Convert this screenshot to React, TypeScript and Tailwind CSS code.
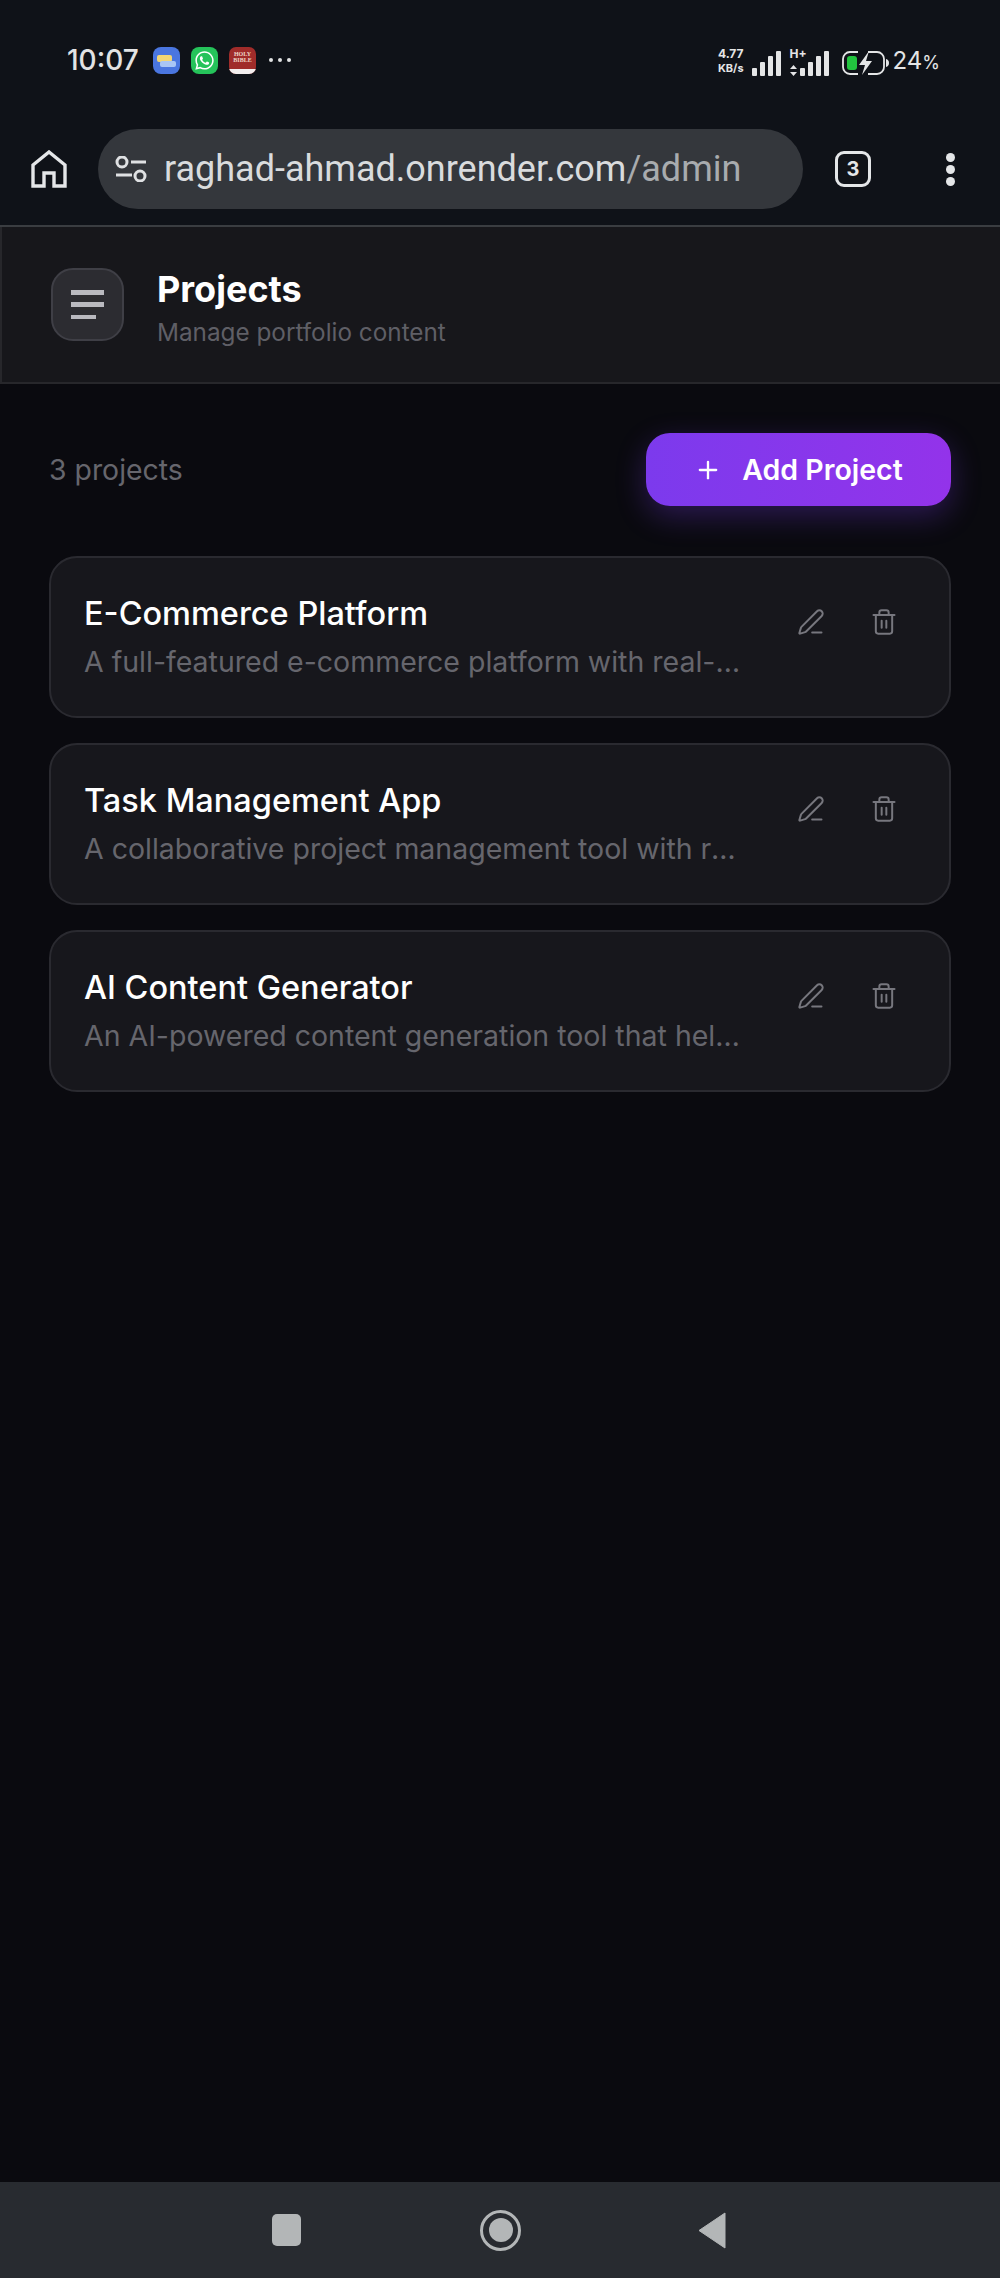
import { Plus, PenLine, Trash2 } from 'lucide-react'
import { FaWhatsapp } from 'react-icons/fa'

const projects = [
  { title: 'E-Commerce Platform', text: 'A full-featured e-commerce platform with real-time inventory' },
  { title: 'Task Management App', text: 'A collaborative project management tool with real-time updates' },
  { title: 'AI Content Generator', text: 'An AI-powered content generation tool that helps creators' },
]

const SignalBars = ({ heights }: { heights: number[] }) => (
  <div className="flex items-end gap-[3px]">
    {heights.map((h, i) => (
      <div key={i} className="w-[5px] rounded-[1px] bg-[#e4e5e6]" style={{ height: h }} />
    ))}
  </div>
)

const StatusBar = () => (
  <div className="flex h-[119px] items-start justify-between pl-[67px] pr-[60px] pt-[46px] font-['Inter',sans-serif]">
    <div className="flex items-center">
      <span className="w-[86px] text-[28px] font-medium leading-[28px] text-[#e2e3e4]">10:07</span>
      <div className="relative h-[27px] w-[27px] overflow-hidden rounded-[8px] bg-[#4a76e0]">
        <div className="absolute left-[4px] top-[8px] h-[7px] w-[15px] rounded-[2px] bg-[#f2d675]" />
        <div className="absolute left-[7px] top-[14px] h-[6px] w-[16px] rounded-[2px] bg-[#a9c6f5]" />
      </div>
      <div className="ml-[11px] flex h-[27px] w-[27px] items-center justify-center rounded-[8px] bg-[#25c35a] text-white">
        <FaWhatsapp size={21} />
      </div>
      <div className="ml-[11px] flex h-[27px] w-[27px] flex-col overflow-hidden rounded-[7px] bg-[#a02c2a]">
        <div className="flex-1 pt-[4px] text-center font-['Liberation_Serif',serif] text-[6px] font-bold leading-[6px] text-[#eed8c8]">
          HOLY<br />BIBLE
        </div>
        <div className="h-[5px] bg-[#f2eeee]" />
      </div>
      <div className="ml-[13px] flex gap-[5px]">
        <div className="h-[4px] w-[4px] rounded-full bg-[#e2e3e4]" />
        <div className="h-[4px] w-[4px] rounded-full bg-[#e2e3e4]" />
        <div className="h-[4px] w-[4px] rounded-full bg-[#e2e3e4]" />
      </div>
    </div>
    <div className="flex items-end text-[#e4e5e6]">
      <div className="w-[31px] text-right text-[12px] font-bold leading-[15px]">
        <div>4.77</div>
        <div className="text-[11px]">KB/s</div>
      </div>
      <div className="ml-[8px]">
        <SignalBars heights={[8, 14, 20, 25]} />
      </div>
      <div className="relative ml-[9px] flex items-end">
        <span className="absolute -top-[3px] left-0 text-[12px] font-bold leading-[12px]">H+</span>
        <svg width="7" height="11" viewBox="0 0 7 11" className="mr-[3px]" fill="#e4e5e6">
          <path d="M3.5 0 7 4H0z" />
          <path d="M0 7h7l-3.500 4z" />
        </svg>
        <SignalBars heights={[8, 14, 20, 25]} />
      </div>
      <svg width="47" height="26" viewBox="0 0 47 26" className="ml-[13px]" fill="none">
        <rect x="1" y="2" width="41" height="22" rx="7" stroke="#e4e5e6" strokeWidth="1.800" />
        <rect x="5" y="6" width="10" height="14" rx="3" fill="#22c43f" />
        <path d="M44 9c2 .5 3 2 3 4s-1 3.500-3 4z" fill="#e4e5e6" />
        <path d="M16 0h10v26H16z" fill="#0f1218" />
        <path d="M27 1 17 15h6l-3 10 10-14h-6z" fill="#e4e5e6" />
      </svg>
      <span className="ml-[4px] text-[24px] leading-[26px]">
        24<span className="text-[18px]">%</span>
      </span>
    </div>
  </div>
)

const BrowserBar = () => (
  <div className="flex h-[108px] items-start border-b-2 border-[#3a3d41] pt-[10px]">
    <div className="flex h-[80px] w-[98px] items-center justify-center">
      <svg width="36" height="38" viewBox="0 0 36 38" fill="none" stroke="#e4e6e8" strokeWidth="3.400">
        <path d="M2 36V15L18 2l16 13v21H23V23H13v13z" strokeLinejoin="miter" />
      </svg>
    </div>
    <div className="flex h-[80px] w-[705px] items-center rounded-full bg-[#34373c] pl-[17px] font-['Roboto',sans-serif]">
      <svg width="32" height="26" viewBox="0 0 32 26" fill="none" stroke="#dfe1e3" strokeWidth="3">
        <circle cx="7" cy="6" r="5" />
        <path d="M16 6h15M1 19h16" />
        <circle cx="25" cy="20" r="5" />
      </svg>
      <span className="ml-[17px] text-[36px] leading-[44px] text-[#d9dbdd]">
        raghad-ahmad.onrender.com<span className="text-[#a8abae]">/admin</span>
      </span>
    </div>
    <div className="flex h-[80px] flex-1 items-center justify-between pl-[32px] pr-[45px]">
      <div className="flex h-[36px] w-[36px] items-center justify-center rounded-[9px] border-[3px] border-[#e4e6e8] font-['Inter',sans-serif] text-[20px] font-bold text-[#e4e6e8]">
        3
      </div>
      <div className="flex flex-col gap-[3px]">
        <div className="h-[9px] w-[9px] rounded-full bg-[#e4e6e8]" />
        <div className="h-[9px] w-[9px] rounded-full bg-[#e4e6e8]" />
        <div className="h-[9px] w-[9px] rounded-full bg-[#e4e6e8]" />
      </div>
    </div>
  </div>
)

const ProjectCard = ({ title, text }: { title: string; text: string }) => (
  <div className="flex h-[162px] items-start rounded-[28px] border-2 border-[#2a2a30] bg-[#17171c] pl-[33px] pr-[51px] pt-[36px]">
    <div className="w-[660px] min-w-0">
      <div className="text-[32.500px] font-medium leading-[40px] text-white">{title}</div>
      <div className="mt-[8px] truncate text-[28.500px] leading-[40px] text-[#66666d]">{text}</div>
    </div>
    <div className="ml-auto flex items-center gap-[45px] pt-[14px] text-[#77777e]">
      <PenLine size={28} strokeWidth={1.700} />
      <Trash2 size={28} strokeWidth={1.700} />
    </div>
  </div>
)

export default function App() {
  return (
    <div className="flex min-h-[2278px] flex-col bg-[#0a0a0f] font-['Inter',sans-serif]">
      <div className="bg-[#0f1218]">
        <StatusBar />
        <BrowserBar />
      </div>

      <header className="flex h-[157px] items-center border-b-2 border-l-2 border-[#27272b] bg-[#17171b] pl-[49px]">
        <div className="flex h-[73px] w-[73px] items-center justify-center rounded-[22px] border-2 border-[#3f3f46] bg-[#2c2c31]">
          <svg width="34" height="30" viewBox="0 0 34 30" fill="#b9b9bf">
            <rect y="0" width="33" height="5" />
            <rect y="12" width="33" height="5" />
            <rect y="25" width="25" height="4" />
          </svg>
        </div>
        <div className="ml-[33px] pt-[7px]">
          <h1 className="text-[36px] font-bold leading-[40px] text-white">Projects</h1>
          <p className="mt-[7px] text-[24.300px] leading-[32px] text-[#5f5f66]">Manage portfolio content</p>
        </div>
      </header>

      <main className="flex-1 px-[49px] pt-[49px]">
        <div className="flex items-center justify-between">
          <span className="pt-[2px] text-[28.400px] text-[#66666d]">3 projects</span>
          <button className="flex h-[73px] w-[305px] items-center justify-center gap-[20px] rounded-[24px] bg-gradient-to-r from-[#7c3aed] to-[#9333ea] pt-[1px] text-[28.500px] font-semibold text-white shadow-[0_10px_30px_rgba(124,58,237,0.3)]">
            <Plus size={28} strokeWidth={2} />
            Add Project
          </button>
        </div>
        <div className="mt-[50px] flex flex-col gap-[25px]">
          {projects.map((p) => (
            <ProjectCard key={p.title} title={p.title} text={p.text} />
          ))}
        </div>
      </main>

      <nav className="flex h-[96px] items-center bg-[#282b30] pl-[272px]">
        <div className="h-[32px] w-[29px] rounded-[5px] bg-[#b3b6b7]" />
        <div className="ml-[179px] flex h-[41px] w-[41px] items-center justify-center rounded-full border-[3px] border-[#b3b6b7]">
          <div className="h-[24px] w-[24px] rounded-full bg-[#b3b6b7]" />
        </div>
        <svg width="28" height="37" viewBox="0 0 28 37" className="ml-[177px]" fill="#b3b6b7">
          <path d="M27 1 1 18.500l26 17.500z" stroke="#b3b6b7" strokeLinejoin="round" />
        </svg>
      </nav>
    </div>
  )
}
